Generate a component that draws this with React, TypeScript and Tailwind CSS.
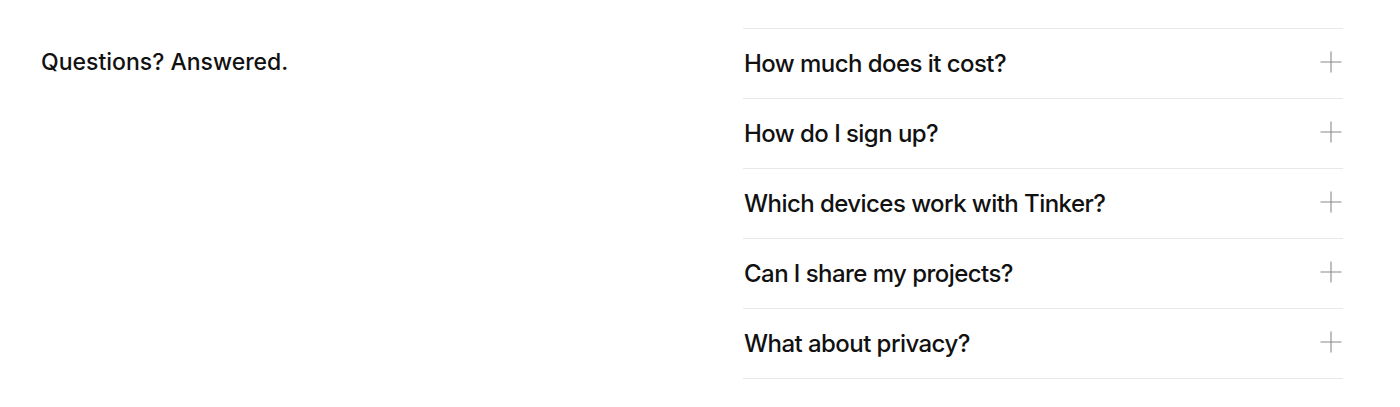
import { useState } from "react";

const faqs = [
  "How much does it cost?",
  "How do I sign up?",
  "Which devices work with Tinker?",
  "Can I share my projects?",
  "What about privacy?",
];

const PlusIcon = () => (
  <svg width="22" height="22" viewBox="0 0 22 22" fill="none" className="shrink-0">
    <path d="M11 0.5v21M0.5 11h21" stroke="#8a8a8a" strokeWidth="1.1" />
  </svg>
);

export default function App() {
  const [open, setOpen] = useState<number | null>(null);

  return (
    <div
      className="w-full h-[407px] bg-white text-[#111] flex pl-[41px] pr-[57px] pt-[28px]"
      style={{ fontFamily: "Inter, 'Liberation Sans', sans-serif" }}
    >
      <div className="flex-1">
        <h2 className="text-[23px] font-medium leading-[70px] -mt-[1px]">
          Questions? Answered.
        </h2>
      </div>
      <div className="w-[600px] border-t border-[#e8e8e8]">
        {faqs.map((q, i) => (
          <button
            key={q}
            onClick={() => setOpen(open === i ? null : i)}
            className="w-full h-[70px] flex items-center justify-between border-b border-[#e8e8e8] text-left"
          >
            <span className="text-[24px] font-medium tracking-[-0.55px] pl-[1px] pt-[1px]">{q}</span>
            <span className="pr-[1px] -mt-[3px]">
              <PlusIcon />
            </span>
          </button>
        ))}
      </div>
    </div>
  );
}
